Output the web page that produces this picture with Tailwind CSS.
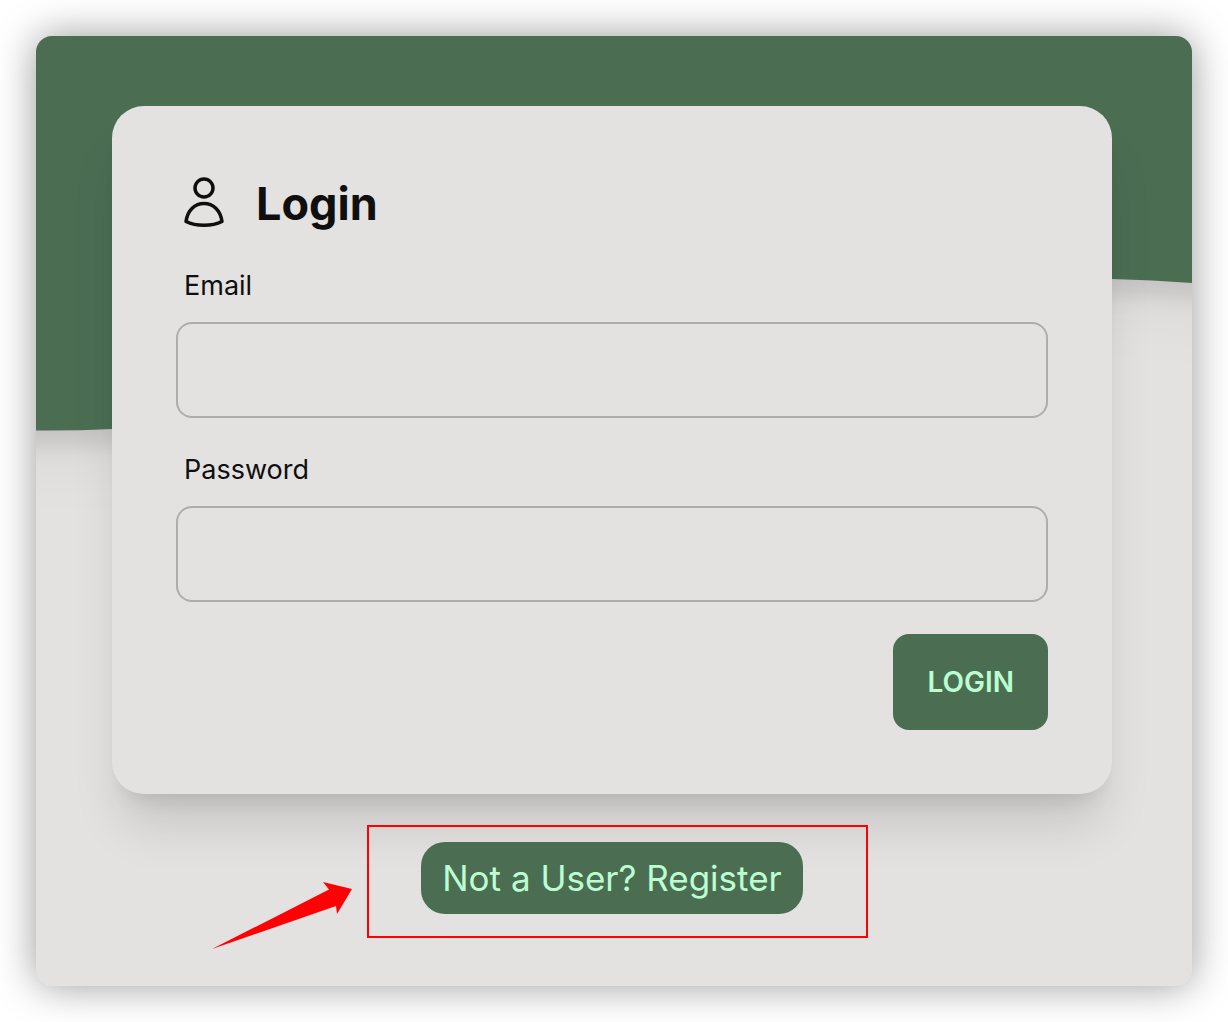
<!DOCTYPE html>
<html lang="en">
<head>
<meta charset="utf-8">
<meta name="viewport" content="width=device-width, initial-scale=1">
<title>Login</title>
<script src="https://cdn.jsdelivr.net/npm/@tailwindcss/browser@4"></script>
</head>
<body class="flex min-h-screen bg-white p-9 font-['Inter','Liberation_Sans',sans-serif] text-[#0f0f0f]">
<main class="relative isolate flex-1 rounded-2xl bg-[#e3e2e0] pt-[70px] pr-20 pb-[72px] pl-[76px] shadow-[0_0_40px_rgba(0,0,0,0.4)]">
  <!-- Wave backdrop -->
  <div class="absolute inset-0 -z-10 overflow-hidden rounded-2xl" aria-hidden="true">
    <svg class="h-[396px] w-full overflow-visible text-[#4b6e53] [filter:drop-shadow(0_40px_26px_rgba(0,0,0,0.03))_drop-shadow(0_16px_10px_rgba(0,0,0,0.1))]" viewBox="0 0 1156 396" preserveAspectRatio="none" fill="currentColor">
      <path d="M-60 0H1216V252L1156 247Q1116 244 1076 243C700 230 450 380 76 393Q36 395 0 394.500L-60 393Z"/>
    </svg>
  </div>

  <form class="flex flex-col rounded-[32px] bg-[#e3e2e0] p-16 shadow-[0_40px_50px_-10px_rgba(0,0,0,0.13),0_16px_20px_-12px_rgba(0,0,0,0.11)]">
    <h1 class="mb-4 flex h-16 items-center gap-8 px-2 pt-1 text-[45px] font-bold">
      <svg class="-mt-1 h-[50px] w-10" viewBox="0 0 40 50" fill="none" stroke="currentColor" stroke-width="3.500" stroke-linejoin="round" aria-hidden="true">
        <circle cx="20" cy="11" r="9"/>
        <path d="M2 44.500C3.500 33 11 26.500 20 26.500S36.500 33 38 44.500C33 47 27 48.200 20 48.200S7 47 2 44.500Z"/>
      </svg>
      Login
    </h1>
    <label for="email" class="px-2 py-4 text-[27px] leading-10">Email</label>
    <input id="email" type="email" class="mb-4 h-24 w-full rounded-2xl border-2 border-[#adadab] bg-transparent px-8 text-[27px]">
    <label for="password" class="px-2 py-4 text-[27px] leading-10">Password</label>
    <input id="password" type="password" class="h-24 w-full rounded-2xl border-2 border-[#adadab] bg-transparent px-8 text-[27px]">
    <button type="submit" class="mt-8 h-24 self-end rounded-2xl bg-[#4b6e53] px-[34px] text-[28px] font-semibold text-[#bbffd1]">LOGIN</button>
  </form>

  <div class="mt-12 flex justify-center">
    <div class="relative">
      <a href="#" class="block rounded-3xl bg-[#4b6e53] px-[21px] py-4 text-[35px] leading-10 text-[#bbffd1]">Not a User? Register</a>
      <!-- Callout frame and arrow -->
      <div class="pointer-events-none absolute -top-[17px] -right-[65px] -bottom-6 -left-[54px] border-2 border-[#ff0004]"></div>
      <svg class="pointer-events-none absolute top-10 right-full mr-[68px] h-[68px] w-[141px]" viewBox="0 0 141 68" fill="#ff0004" aria-hidden="true">
        <path d="M0 67L117 7.500L111 0L140 7L125 32L124 24Z"/>
      </svg>
    </div>
  </div>
</main>
</body>
</html>
